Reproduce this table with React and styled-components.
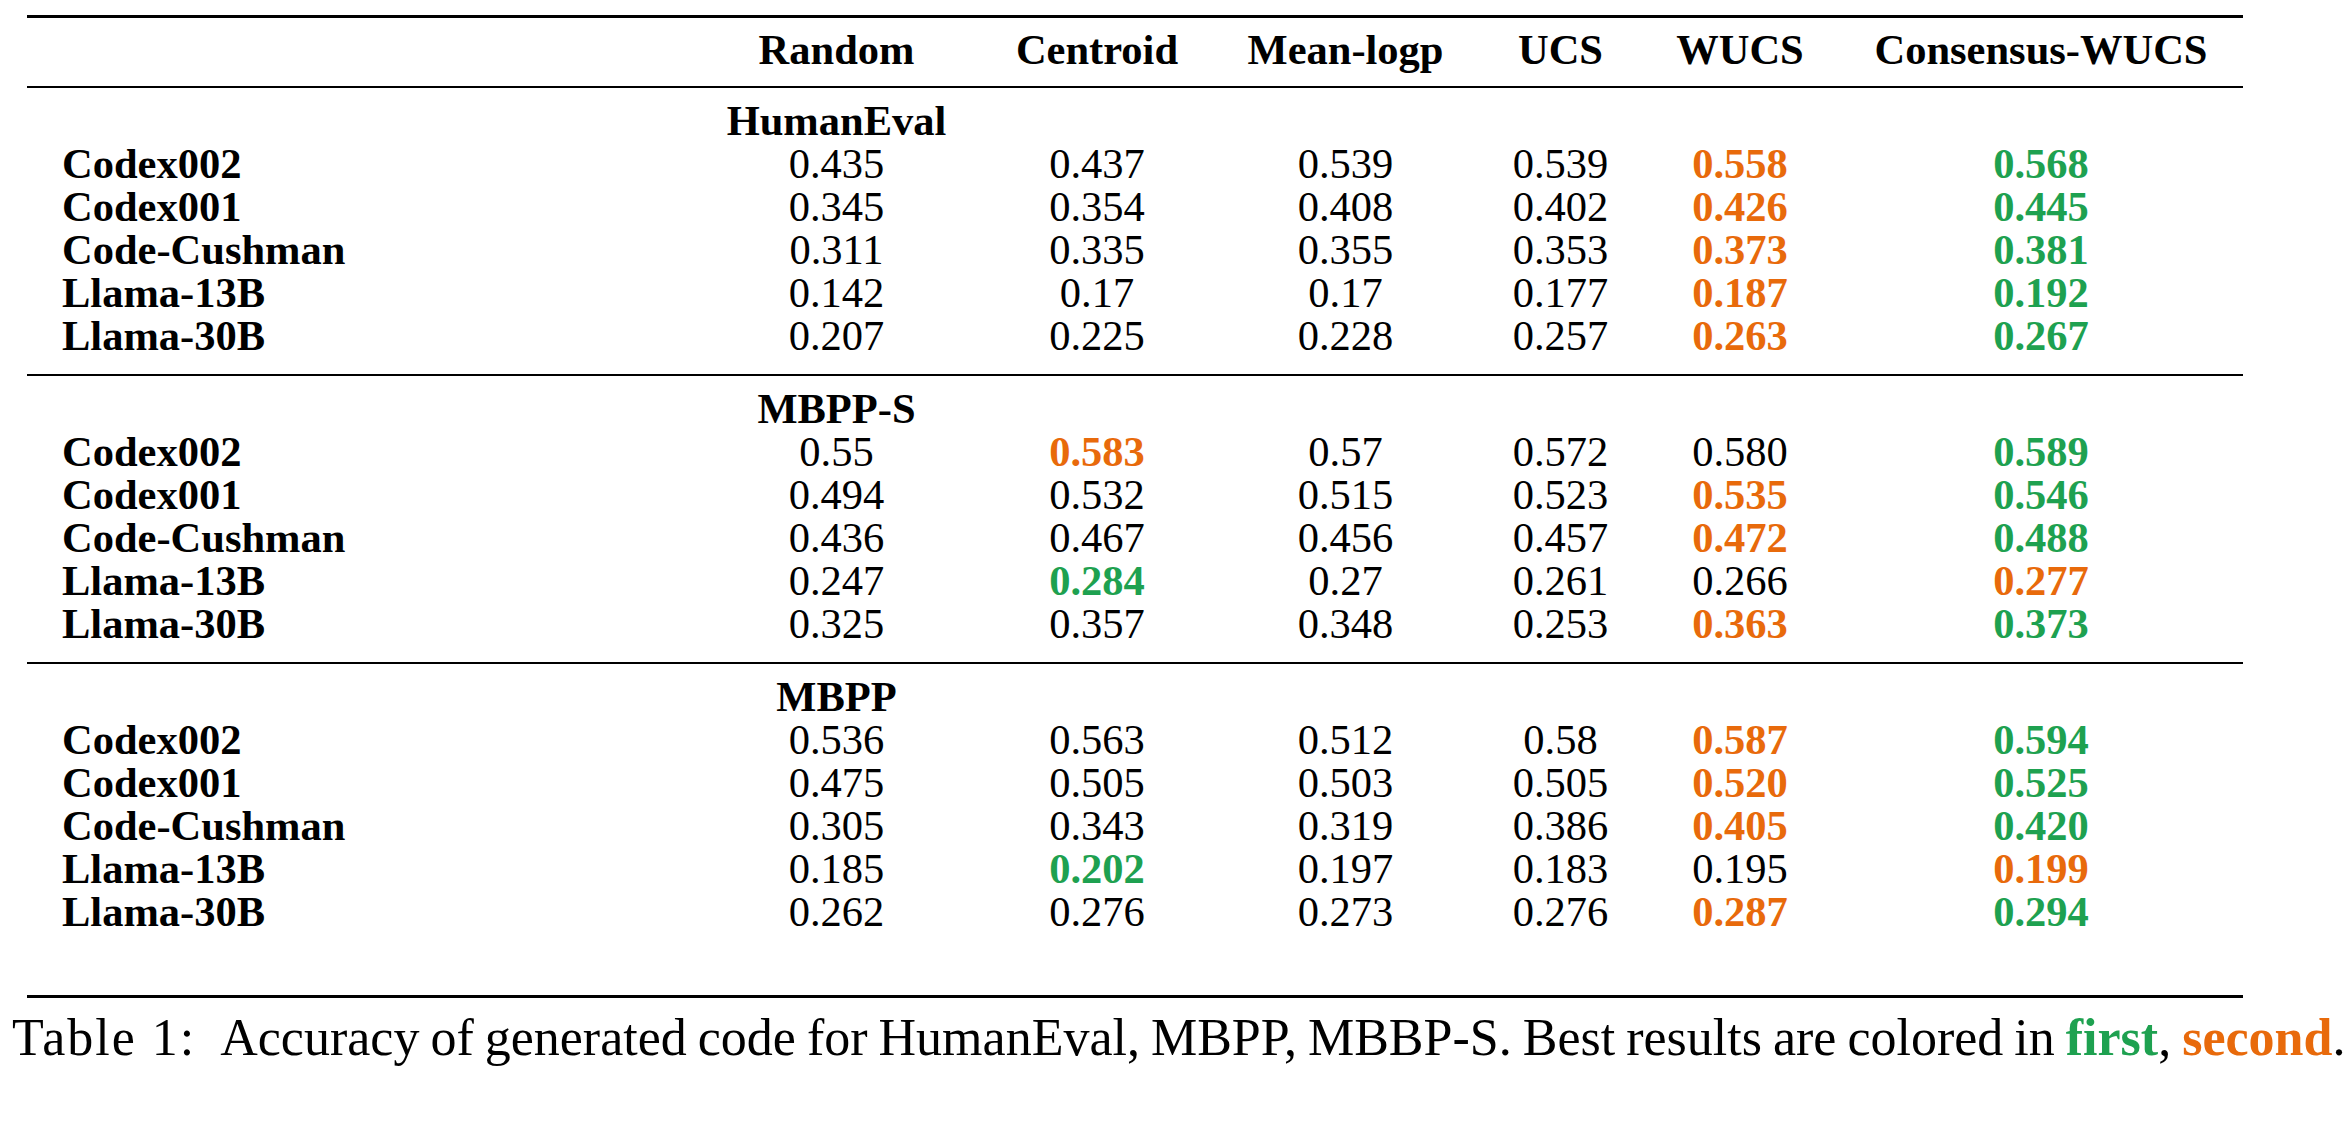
import React from 'react';
import styled, {createGlobalStyle} from 'styled-components';

const colors = {
  first: '#1ea150',
  second: '#e86a0b',
  rule: '#000',
};

const cols = '663px 293px 228px 269px 161px 198px 404px';

const Global = createGlobalStyle`
  html, body {
    margin: 0;
    padding: 0;
    background: #fff;
  }
  body {
    font-family: "Liberation Serif", "Times New Roman", serif;
    color: #000;
  }
`

const Page = styled.div`
  padding-top: 15px;
  width: 2348px;
`

const Table = styled.div`
  margin-left: 27px;
  width: 2216px;
  border-top: 3px solid ${colors.rule};
  border-bottom: 3px solid ${colors.rule};
  font-size: 42.5px;
  line-height: 43px;
`

const Head = styled.div`
  padding: 10px 0 15px;
  border-bottom: 2px solid ${colors.rule};
`

const Section = styled.div`
  padding: 11px 0 ${p => p.$last ? '62px' : '17px'};
  & + & {
    border-top: 2px solid ${colors.rule};
  }
`

const Row = styled.div`
  display: grid;
  grid-template-columns: ${cols};
  height: 43px;
  white-space: nowrap;
`

const Label = styled.div`
  padding-left: 35px;
  font-weight: bold;
`

const Cell = styled.div`
  text-align: center;
  font-weight: ${p => p.$bold ? 'bold' : 'normal'};
  color: ${p => p.$rank === 'g' ? colors.first : p.$rank === 'o' ? colors.second : '#000'};
`

const Caption = styled.p`
  margin: 12px 0 0 12px;
  font-family: "Liberation Serif", "Times New Roman", serif;
  font-size: 52px;
  line-height: 56px;
  word-spacing: -2px;
  white-space: nowrap;
  b {
    font-weight: bold;
  }
  .tag {
    letter-spacing: 2px;
    word-spacing: 0;
    margin-right: 24px;
  }
  .first { color: ${colors.first}; }
  .second { color: ${colors.second}; }
`

const methods = ['Random', 'Centroid', 'Mean-logp', 'UCS', 'WUCS', 'Consensus-WUCS'];

const data = [
  {
    name: 'HumanEval',
    rows: [
      ['Codex002', '0.435', '0.437', '0.539', '0.539', '0.558o', '0.568g'],
      ['Codex001', '0.345', '0.354', '0.408', '0.402', '0.426o', '0.445g'],
      ['Code-Cushman', '0.311', '0.335', '0.355', '0.353', '0.373o', '0.381g'],
      ['Llama-13B', '0.142', '0.17', '0.17', '0.177', '0.187o', '0.192g'],
      ['Llama-30B', '0.207', '0.225', '0.228', '0.257', '0.263o', '0.267g'],
    ],
  },
  {
    name: 'MBPP-S',
    rows: [
      ['Codex002', '0.55', '0.583o', '0.57', '0.572', '0.580', '0.589g'],
      ['Codex001', '0.494', '0.532', '0.515', '0.523', '0.535o', '0.546g'],
      ['Code-Cushman', '0.436', '0.467', '0.456', '0.457', '0.472o', '0.488g'],
      ['Llama-13B', '0.247', '0.284g', '0.27', '0.261', '0.266', '0.277o'],
      ['Llama-30B', '0.325', '0.357', '0.348', '0.253', '0.363o', '0.373g'],
    ],
  },
  {
    name: 'MBPP',
    rows: [
      ['Codex002', '0.536', '0.563', '0.512', '0.58', '0.587o', '0.594g'],
      ['Codex001', '0.475', '0.505', '0.503', '0.505', '0.520o', '0.525g'],
      ['Code-Cushman', '0.305', '0.343', '0.319', '0.386', '0.405o', '0.420g'],
      ['Llama-13B', '0.185', '0.202g', '0.197', '0.183', '0.195', '0.199o'],
      ['Llama-30B', '0.262', '0.276', '0.273', '0.276', '0.287o', '0.294g'],
    ],
  },
];

function Value({raw}) {
  const last = raw.slice(-1);
  const rank = last === 'o' || last === 'g' ? last : null;
  const text = rank ? raw.slice(0, -1) : raw;
  return <Cell $bold={!!rank} $rank={rank}>{text}</Cell>;
}

export default function App() {
  return (
    <Page>
      <Global/>
      <Table>
        <Head>
          <Row>
            <div/>
            {methods.map(m => <Cell key={m} $bold>{m}</Cell>)}
          </Row>
        </Head>
        {data.map((section, i) => (
          <Section key={section.name} $last={i === data.length - 1}>
            <Row>
              <div/>
              <Cell $bold>{section.name}</Cell>
            </Row>
            {section.rows.map(([label, ...vals]) => (
              <Row key={label}>
                <Label>{label}</Label>
                {vals.map((v, j) => <Value key={j} raw={v}/>)}
              </Row>
            ))}
          </Section>
        ))}
      </Table>
      <Caption>
        <span className="tag">Table 1:</span>
        Accuracy of generated code for HumanEval, MBPP, MBBP-S. Best results are colored in{' '}
        <b className="first">first</b>, <b className="second">second</b>.
      </Caption>
    </Page>
  );
}
